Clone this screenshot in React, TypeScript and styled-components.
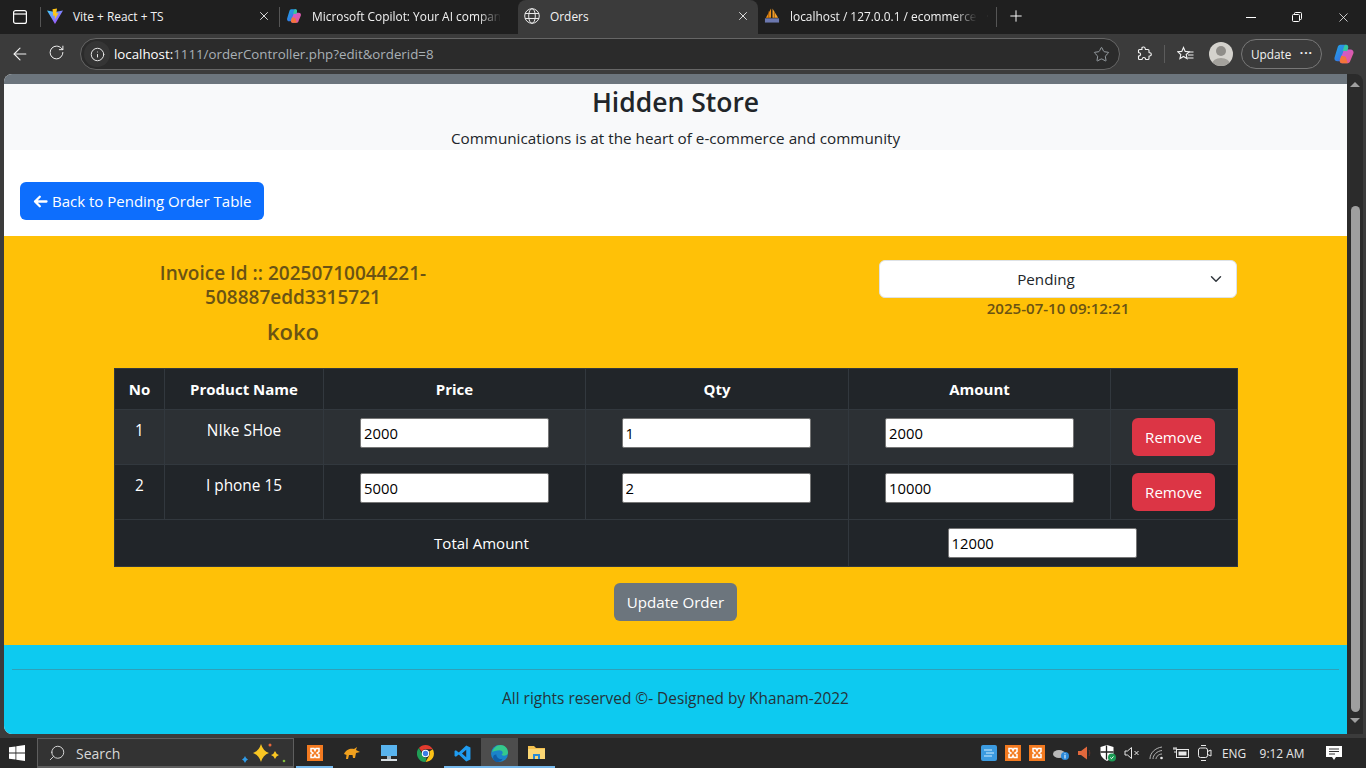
import styled, { createGlobalStyle } from 'styled-components'
import { ArrowLeft, Info, Plus, RotateCw, Search, Star, X } from 'lucide-react'

const GlobalStyle = createGlobalStyle`
  html, body { margin: 0; padding: 0; height: 100%; overflow: hidden; }
  body { font-family: "Open Sans", "Noto Sans", sans-serif; background: #3b3b3b; }
  * { box-sizing: border-box; }
`

const Shell = styled.div`
  width: 1366px;
  height: 768px;
  display: flex;
  flex-direction: column;
  overflow: hidden;
`

/* browser chrome */
const TabStrip = styled.div`
  height: 34px;
  background: #1f1f1f;
  display: flex;
  align-items: center;
  color: #fff;
`
const SideBtn = styled.div`
  width: 40px;
  display: flex;
  justify-content: center;
`
const TabSep = styled.div`
  width: 1px;
  height: 20px;
  background: #555;
`
const Tab = styled.div<{ $active?: boolean; $width?: number }>`
  width: ${p => p.$width ?? 238}px;
  height: 34px;
  display: flex;
  align-items: center;
  gap: 10px;
  padding: 0 8px 3px 6px;
  font-size: 11.9px;
  color: #f2f2f2;
  background: ${p => (p.$active ? '#3b3b3b' : 'transparent')};
  border-radius: ${p => (p.$active ? '8px 8px 0 0' : '0')};
`
const TabIcon = styled.span`
  width: 16px;
  height: 16px;
  display: flex;
  align-items: center;
  justify-content: center;
  flex: none;
`
const TabTitle = styled.span<{ $fade?: boolean }>`
  flex: 1;
  white-space: nowrap;
  ${p => (p.$fade ? 'mask-image: linear-gradient(to right, #000 88%, transparent 100%);' : '')}
`
const NewTab = styled.div`
  width: 38px;
  display: flex;
  justify-content: center;
  padding-bottom: 2px;
`
const WindowControls = styled.div`
  margin-left: auto;
  display: flex;
  width: 138px;
`
const WinBtn = styled.div`
  width: 46px;
  height: 32px;
  display: flex;
  align-items: center;
  justify-content: center;
`

const Toolbar = styled.div`
  height: 40px;
  background: #3b3b3b;
  display: flex;
  align-items: center;
  color: #f2f2f2;
`
const NavBtn = styled.div`
  width: 36px;
  display: flex;
  justify-content: center;
`
const NavGroup = styled.div`
  width: 80px;
  padding-left: 2px;
  display: flex;
`
const AddressBar = styled.div`
  width: 1040px;
  height: 32px;
  background: #2b2b2b;
  border: 1px solid #666;
  border-radius: 16px;
  display: flex;
  align-items: center;
  padding: 0 9px 0 3px;
  font-size: 13.3px;
  color: #a9b0b6;
`
const SiteInfo = styled.div`
  width: 26px;
  height: 26px;
  border-radius: 50%;
  background: #353535;
  display: flex;
  align-items: center;
  justify-content: center;
  color: #e6e6e6;
`
const Url = styled.span`
  flex: 1;
  padding-left: 4px;
`
const UrlHost = styled.span`
  color: #fff;
`
const ToolIcon = styled.div<{ $width: number; $shift?: number }>`
  width: ${p => p.$width}px;
  display: flex;
  justify-content: center;
  align-items: center;
  padding-left: ${p => Math.max(p.$shift ?? 0, 0)}px;
  padding-right: ${p => Math.max(-(p.$shift ?? 0), 0)}px;
`
const ToolSep = styled.div`
  width: 1px;
  height: 18px;
  background: #5c5c5c;
`
const Avatar = styled.div`
  width: 24px;
  height: 24px;
  border-radius: 50%;
  overflow: hidden;
`
const UpdatePill = styled.div`
  width: 81px;
  height: 30px;
  border: 1px solid #777;
  border-radius: 15px;
  display: flex;
  align-items: center;
  justify-content: space-between;
  padding: 0 8px 0 9px;
  font-size: 11.8px;
  color: #f2f2f2;
`
const Dots = styled.span`
  letter-spacing: 1px;
  font-weight: 700;
  font-size: 12px;
  line-height: 1;
  margin-top: -2px;
`

/* viewport */
const Viewport = styled.div`
  flex: 1;
  display: flex;
  padding: 0 3px 4px 4px;
  min-height: 0;
`
const Page = styled.div`
  flex: 1;
  display: flex;
  flex-direction: column;
  color: #212529;
  font-size: 15px;
  line-height: 24px;
  background: #fff;
  overflow: hidden;
  border-radius: 8px 0 0 8px;
`
const Scrollbar = styled.div`
  width: 16px;
  background: #2b2b2b;
  border-radius: 0 8px 0 0;
  display: flex;
  flex-direction: column;
  align-items: center;
  padding-top: 8px;
`
const ScrollArrow = styled.div<{ $down?: boolean }>`
  width: 0;
  height: 0;
  border-left: 5px solid transparent;
  border-right: 5px solid transparent;
  ${p => (p.$down ? 'border-top: 5px solid #9f9f9f;' : 'border-bottom: 5px solid #9f9f9f;')}
`
const ScrollThumb = styled.div`
  width: 9px;
  height: 506px;
  margin-top: 119px;
  margin-bottom: 6px;
  border-radius: 5px;
  background: #9f9f9f;
`
const TopBar = styled.div`
  height: 10px;
  background: #6c757d;
`
const Masthead = styled.header`
  height: 66px;
  background: #f8f9fa;
  text-align: center;
  padding-top: 1px;
`
const StoreTitle = styled.h1`
  margin: 0;
  font-size: 26.5px;
  font-weight: 600;
  line-height: 34px;
`
const Tagline = styled.p`
  margin: 7px 0 0;
  font-size: 15.25px;
  line-height: 24px;
`
const BackRow = styled.div`
  height: 86px;
  padding: 32px 16px 0;
`
const Btn = styled.button<{ $bg: string }>`
  height: 38px;
  border: 0;
  border-radius: 6px;
  background: ${p => p.$bg};
  color: #fff;
  font: inherit;
  font-size: 15.1px;
  padding: 0 13px;
  display: inline-flex;
  align-items: center;
  gap: 4px;
  vertical-align: top;
`
const BackBtn = styled(Btn)`
  font-size: 15px;
  padding-right: 12px;
`
const RemoveBtn = styled(Btn)`
  margin-left: -1px;
`
const OrderSection = styled.section`
  height: 409px;
  background: #ffc107;
  padding: 24px 110px 0 110px;
`
const OrderTop = styled.div`
  height: 108px;
  display: flex;
  justify-content: space-between;
  align-items: flex-start;
`
const InvoiceCol = styled.div`
  width: 358px;
  text-align: center;
  color: #6a5314;
  font-weight: 600;
  padding: 0 30px;
`
const InvoiceId = styled.div`
  font-size: 19px;
  line-height: 24px;
  margin-top: 1px;
`
const Customer = styled.div`
  font-size: 22px;
  line-height: 30px;
  margin-top: 7px;
`
const StatusCol = styled.div`
  width: 358px;
  text-align: center;
  color: #6a5314;
  font-weight: 600;
  font-size: 15.1px;
`
const StatusSelect = styled.select`
  display: block;
  width: 100%;
  height: 38px;
  appearance: none;
  border: 1px solid #dee2e6;
  border-radius: 6px;
  padding: 0 36px 0 12px;
  color: #212529;
  font: 400 15.2px "Open Sans", sans-serif;
  text-align: center;
  background: #fff url("data:image/svg+xml,%3csvg xmlns='http://www.w3.org/2000/svg' viewBox='0 0 16 16'%3e%3cpath fill='none' stroke='%23343a40' stroke-linecap='round' stroke-linejoin='round' stroke-width='2' d='m2 5 6 6 6-6'/%3e%3c/svg%3e") no-repeat right 12px center / 16px 12px;
`
const DateText = styled.div`
  line-height: 20px;
`
const OrderTable = styled.table`
  width: 1123px;
  table-layout: fixed;
  border-collapse: collapse;
  background: #212529;
  color: #fff;
  border: 1px solid #32383e;
  text-align: center;
`
const HeadCell = styled.th`
  height: 41px;
  border: 1px solid #32383e;
  font-weight: 700;
  font-size: 15px;
  padding: 0 8px;
`
const Row = styled.tr<{ $striped?: boolean }>`
  background: ${p => (p.$striped ? '#2c3034' : '#212529')};
`
const Cell = styled.td<{ $nudge?: boolean }>`
  height: 55px;
  border: 1px solid #32383e;
  padding: 8px ${p => (p.$nudge ? '10px' : '8px')} 8px 8px;
  vertical-align: top;
  font-size: 15.4px;
  line-height: 26px;
`
const TotalLabel = styled.td`
  height: 47px;
  border: 1px solid #32383e;
  font-size: 15px;
  padding: 0 8px 1px;
`
const TotalValue = styled.td`
  height: 47px;
  border: 1px solid #32383e;
  padding: 0 10px 1px 8px;
`
const QtyInput = styled.input`
  display: block;
  width: 189px;
  height: 30px;
  margin: 0 auto;
  border: 1px solid #767676;
  border-radius: 2px;
  padding: 0 3px;
  font: 400 14.8px "Open Sans", sans-serif;
  color: #000;
  background: #fff;
`
const UpdateWrap = styled.div`
  padding-top: 16px;
  display: flex;
  justify-content: center;
`
const Footer = styled.footer`
  height: 89px;
  background: #0dcaf0;
  padding: 24px 8px 0;
  text-align: center;
`
const FooterRule = styled.hr`
  margin: 0;
  border: 0;
  border-top: 1px solid #2fa0b8;
`
const FooterText = styled.p`
  margin: 17px 0 0;
  font-size: 15.4px;
  line-height: 24px;
  color: #24343a;
`

/* taskbar */
const Taskbar = styled.div`
  height: 30px;
  background: #272727;
  display: flex;
  align-items: center;
  color: #e8e8e8;
`
const StartBtn = styled.div`
  width: 37px;
  display: flex;
  justify-content: center;
  padding-right: 3px;
`
const SearchBox = styled.div`
  width: 257px;
  height: 30px;
  background: #333;
  border: 1px solid #5e5e5e;
  border-bottom-width: 2px;
  display: flex;
  align-items: center;
  padding: 0 6px 0 10px;
  gap: 10px;
  font-size: 14px;
  color: #d8d8d8;
`
const SearchGlyph = styled.span`
  display: flex;
  transform: scaleX(-1);
`
const SearchLabel = styled.span`
  flex: 1;
  padding-top: 1px;
`
const TaskIcons = styled.div`
  display: flex;
  padding-left: 2px;
`
const TaskItem = styled.div<{ $active?: boolean; $running?: boolean }>`
  width: 37px;
  height: 30px;
  display: flex;
  align-items: center;
  justify-content: center;
  background: ${p => (p.$active ? '#4d4d4d' : 'transparent')};
  border-bottom: 2px solid ${p => (p.$running || p.$active ? '#76b9ed' : 'transparent')};
  padding-top: 2px;
`
const Tray = styled.div`
  margin-left: auto;
  display: flex;
  align-items: center;
  height: 30px;
  font-size: 11.9px;
`
const TrayItem = styled.div<{ $width: number }>`
  width: ${p => p.$width}px;
  display: flex;
  justify-content: center;
  align-items: center;
`

const ViteLogo = () => (
  <svg width="16" height="16" viewBox="0 0 16 16">
    <defs>
      <linearGradient id="vt" x1="0" y1="0" x2="1" y2="1">
        <stop offset="0" stopColor="#41d1ff" />
        <stop offset="1" stopColor="#bd34fe" />
      </linearGradient>
    </defs>
    <path d="M0 2.500 L8 4 L16 2.500 L8 16 Z" fill="url(#vt)" />
    <path d="M10 0.500 L5.500 1.300 L6.300 8 L8 7.500 L7.700 11.500 L11.500 5 L9.300 5.500 Z" fill="#ffc517" />
  </svg>
)

const CopilotLogo = ({ size = 16, id }: { size?: number; id: string }) => (
  <svg width={size} height={size} viewBox="0 0 24 24">
    <defs>
      <linearGradient id={`${id}a`} x1="0" y1="0" x2="1" y2="1">
        <stop offset="0" stopColor="#1fa8e8" />
        <stop offset="1" stopColor="#3f5fe0" />
      </linearGradient>
      <linearGradient id={`${id}b`} x1="0" y1="0" x2="1" y2="1">
        <stop offset="0" stopColor="#c65be0" />
        <stop offset="1" stopColor="#e85a8a" />
      </linearGradient>
    </defs>
    <path d="M8 2h6c2 0 3 1.500 2.500 3.500L13 17c-.6 2-2 3-4 3H5c-2.500 0-4-2-3.300-4.300L5 5c.5-2 1.500-3 3-3z" fill={`url(#${id}a)`} />
    <path d="M13 7h6c2.500 0 4 2 3.300 4.300L19 19c-.5 2-1.500 3-3 3h-6c-2 0-3-1.500-2.500-3.500L11 10c.4-2 1-3 2-3z" fill={`url(#${id}b)`} />
    <path d="M10 22c-2 0-3-1.500-2.500-3.500L9 14l5 1 2 7z" fill="#f4743b" />
    <path d="M14 2c2 0 3 1.500 2.500 3.500L15.500 9l-5-.5L12 4c.3-1 1-2 2-2z" fill="#35c7a0" />
  </svg>
)

const GlobeIcon = () => (
  <svg width="16" height="16" viewBox="0 0 16 16" fill="none" stroke="#e8e8e8" strokeWidth="1">
    <circle cx="8" cy="8" r="7.300" />
    <ellipse cx="8" cy="8" rx="3.300" ry="7.300" />
    <path d="M1 5.500h14M1 10.500h14" />
  </svg>
)

const PmaLogo = () => (
  <svg width="17" height="17" viewBox="0 0 17 17">
    <path d="M7.500 1 L2 11 L7.500 11 Z" fill="#f29111" />
    <path d="M9 1 L15 11 L9 11 Z" fill="#f6a32c" />
    <path d="M5 4v7M11 5v6" stroke="#8a4d10" strokeWidth="0.800" />
    <rect x="1" y="11.500" width="15" height="4.500" fill="#6c78af" />
  </svg>
)

const XamppLogo = ({ size = 16 }: { size?: number }) => (
  <svg width={size} height={size} viewBox="0 0 16 16">
    <rect width="16" height="16" fill="#f37a20" />
    <path d="M4 3.500h3l1 2 1-2h3v3l-2 1.500 2 1.500v3H9l-1-2-1 2H4v-3l2-1.500-2-1.500z" fill="none" stroke="#fff" strokeWidth="1.500" />
  </svg>
)

const SidebarIcon = () => (
  <svg width="14" height="14" viewBox="0 0 14 14" fill="none" stroke="#fff" strokeWidth="1.200">
    <rect x="0.600" y="0.600" width="12.800" height="12.800" rx="2" />
    <path d="M0.600 4h12.800" />
  </svg>
)

const RestoreIcon = () => (
  <svg width="10" height="10" viewBox="0 0 10 10" fill="none" stroke="#fff" strokeWidth="1">
    <rect x="0.500" y="2.500" width="7" height="7" rx="1" />
    <path d="M2.500 2.500V1.500a1 1 0 0 1 1-1h5a1 1 0 0 1 1 1v5a1 1 0 0 1-1 1h-1" />
  </svg>
)

const MinIcon = () => (
  <svg width="10" height="10" viewBox="0 0 10 10" stroke="#fff" strokeWidth="1">
    <path d="M0 5.500h10" />
  </svg>
)

const PuzzleIcon = () => (
  <svg width="16" height="16" viewBox="0 0 16 16" fill="none" stroke="#f2f2f2" strokeWidth="1.100">
    <path d="M6 1.500c1-1 3-.6 3.200 1 .1.500 0 .8.300 1h2.500c.5 0 1 .5 1 1v2c.3.400.6.300 1 .3 1.500.2 1.800 2.300.3 3-.5.200-1 .1-1.300.3v2.400c0 .5-.5 1-1 1h-2.300c-.3-.4-.1-.9-.4-1.300-.8-1.200-2.700-.9-3 .4-.1.400 0 .7-.3.900H3.500c-.5 0-1-.5-1-1v-2.400c.3-.3.800-.2 1.200-.4 1.300-.6 1.100-2.600-.4-2.900-.3 0-.6 0-.8-.3V4.500c0-.5.5-1 1-1H6c.3-.5-.5-1.200 0-2z" />
  </svg>
)

const FavIcon = () => (
  <svg width="18" height="16" viewBox="0 0 18 16" fill="none" stroke="#f2f2f2" strokeWidth="1.100">
    <path d="M6.500 1.500l1.700 3.900 4 .4-3 2.700.9 4.100-3.600-2.100-3.600 2.100.9-4.100-3-2.700 4-.4z" />
    <path d="M11.500 6h5M11 9h5.500M10.500 12h6" />
  </svg>
)

const AvatarImg = () => (
  <svg width="24" height="24" viewBox="0 0 24 24">
    <rect width="24" height="24" fill="#d4d2cd" />
    <circle cx="12" cy="9" r="5" fill="#8f8d89" />
    <ellipse cx="12" cy="22" rx="9" ry="6" fill="#a3a19c" />
  </svg>
)

const BackArrow = () => (
  <svg width="15" height="13" viewBox="0 0 15 13" fill="none" stroke="#fff" strokeWidth="2.300" strokeLinecap="round" strokeLinejoin="round">
    <path d="M13.500 6.500H2M6.800 1.700 2 6.500l4.800 4.800" />
  </svg>
)

const WindowsLogo = () => (
  <svg width="16" height="16" viewBox="0 0 16 16" fill="#fff">
    <path d="M0 2.300 6.500 1.400v6.200H0zM7.300 1.300 16 0v7.600H7.300zM0 8.400h6.500v6.200L0 13.700zM7.300 8.400H16V16l-8.700-1.300z" />
  </svg>
)

const Sparkles = () => (
  <svg width="46" height="24" viewBox="0 0 46 24">
    <path d="M20 3 Q22 10 28 12 Q22 14 20 21 Q18 14 12 12 Q18 10 20 3Z" fill="#f9c623" />
    <path d="M34 10 Q35 13 38 14 Q35 15 34 18 Q33 15 30 14 Q33 13 34 10Z" fill="#f9c623" />
    <path d="M4 15 Q5 18 7 18.500 Q5 19 4 22 Q3 19 1 18.500 Q3 18 4 15Z" fill="#2f9be8" />
    <circle cx="29" cy="4" r="1.500" fill="#e8663a" />
    <circle cx="43" cy="20" r="1.300" fill="#7fba3c" />
  </svg>
)

const PgIcon = () => (
  <svg width="18" height="16" viewBox="0 0 18 16">
    <path d="M1 9 C3 4 8 3 11 4 L14 2 L13 5 L17 7 L13 8 L12 13 L10 13 L9.500 10 L6 10 L5 14 L3 14 L3.500 10 Z" fill="#f0a01e" />
  </svg>
)

const MonitorIcon = () => (
  <svg width="18" height="18" viewBox="0 0 18 18">
    <rect x="1" y="1" width="16" height="11" fill="#59b4ee" />
    <rect x="7" y="12" width="4" height="3" fill="#9fb8c8" />
    <rect x="1" y="15" width="16" height="2" fill="#d6dde2" />
  </svg>
)

const ChromeIcon = () => (
  <svg width="17" height="17" viewBox="0 0 16 16">
    <path d="M8 0a8 8 0 0 1 6.900 4H8a4 4 0 0 0-3.500 2L1.800 2.900A8 8 0 0 1 8 0z" fill="#e33b2e" />
    <path d="M14.900 4A8 8 0 0 1 8 16l3.400-6A4 4 0 0 0 11.500 6z" fill="#fbc116" />
    <path d="M8 16A8 8 0 0 1 1.800 2.900L4.500 8A4 4 0 0 0 9 12z" fill="#1f9d55" />
    <circle cx="8" cy="8" r="3" fill="#3b7de8" stroke="#fff" strokeWidth="1" />
  </svg>
)

const VsCodeIcon = () => (
  <svg width="17" height="17" viewBox="0 0 16 16">
    <path d="M11.500 0.500 15.500 2.300V13.700L11.500 15.500 4.500 9 1.800 11 .5 10.300V5.700L1.800 5 4.500 7zM11.500 4.500 7.500 8l4 3.500z" fill="#1f9cf0" />
  </svg>
)

const EdgeIcon = () => (
  <svg width="17" height="17" viewBox="0 0 16 16">
    <circle cx="8" cy="8" r="8" fill="#1b84c9" />
    <path d="M1 7c1-4 4-7 8-7 4 0 7 3 7 7 0 2-2 3-4 3-1 0-2-.5-2-1 2-1 1-4-2-4-3 0-6 1-7 2z" fill="#35c98c" />
    <path d="M5 9c0 3 3 5 6 4-1 2-3 3-5 3-2 0-4-2-4-4 0-2 1-3 3-3z" fill="#0f5ea8" />
  </svg>
)

const FolderIcon = () => (
  <svg width="17" height="16" viewBox="0 0 17 16">
    <path d="M0 1h6l2 2h9v11H0z" fill="#f4c04e" />
    <rect x="0" y="4" width="17" height="10" fill="#fbd774" />
    <path d="M5 9h7v5h-2v-3H7v3H5z" fill="#2a8ad4" />
  </svg>
)

const CloudIcon = () => (
  <svg width="18" height="16" viewBox="0 0 18 16">
    <ellipse cx="7" cy="9" rx="6" ry="4" fill="#b8b8b8" />
    <circle cx="13" cy="11" r="4" fill="#2b88d8" />
    <rect x="12.500" y="10" width="1" height="3.500" fill="#fff" />
    <rect x="12.500" y="8.300" width="1" height="1" fill="#fff" />
  </svg>
)

const RedSpeaker = () => (
  <svg width="16" height="16" viewBox="0 0 16 16">
    <path d="M1 6h3l6-4.500v13L4 10H1z" fill="#e2683c" />
    <path d="M12 5c1 2 1 4 0 6" stroke="#6e3326" fill="none" />
  </svg>
)

const ShieldIcon = () => (
  <svg width="18" height="18" viewBox="0 0 18 18">
    <path d="M8 1 14.500 3v6c0 3.500-3 6-6.500 8-3.500-2-6.500-4.500-6.500-8V3z" fill="#fff" />
    <path d="M7.500 1.500v14M1.500 8h13" stroke="#222" strokeWidth="1.300" />
    <circle cx="13" cy="13.500" r="4" fill="#1a9a54" />
    <path d="M11.300 13.500l1.200 1.200 2-2.200" stroke="#fff" fill="none" />
  </svg>
)

const MuteIcon = () => (
  <svg width="16" height="14" viewBox="0 0 16 14" fill="none" stroke="#e8e8e8">
    <path d="M1 5h2.500L7.500 1.500v11L3.500 9H1z" />
    <path d="M10.500 5l4 4M14.500 5l-4 4" />
  </svg>
)

const WifiIcon = () => (
  <svg width="16" height="14" viewBox="0 0 16 14" fill="none" stroke="#b5b5b5">
    <path d="M1 13C1 7 6 2 13 1M4 13c0-4 4-8 9-8.500M7 13c0-2.500 3-5 6-5" />
    <circle cx="12.500" cy="12" r="1.300" fill="#e8e8e8" stroke="none" />
  </svg>
)

const BatteryIcon = () => (
  <svg width="18" height="14" viewBox="0 0 18 14" fill="none" stroke="#e8e8e8">
    <rect x="4.500" y="3.500" width="12" height="8" />
    <rect x="6.500" y="5.500" width="8" height="4" fill="#e8e8e8" stroke="none" />
    <path d="M1 3h4M2 1v2M4 1v2M3 5v2" />
  </svg>
)

const CameraIcon = () => (
  <svg width="14" height="18" viewBox="0 0 14 18" fill="none" stroke="#e8e8e8">
    <rect x="0.500" y="4" width="9" height="9.500" rx="2" />
    <path d="M9.500 7.500 13 6v6l-3.500-1.500M3 1.500h5M3 16.500h5" />
  </svg>
)

const ChatIcon = () => (
  <svg width="16" height="16" viewBox="0 0 16 16">
    <path d="M0 1h16v11h-6l-2 3-2-3H0z" fill="#fff" />
    <path d="M3 4h10M3 6.500h10M3 9h6" stroke="#333" />
  </svg>
)

const TrayAppIcon = () => (
  <svg width="16" height="16" viewBox="0 0 16 16">
    <rect width="16" height="16" rx="2" fill="#3c9be0" />
    <path d="M3 5h8M5 8h8M3 11h8" stroke="#cfeeff" />
  </svg>
)

const items = [
  { no: 1, name: 'NIke SHoe', price: 2000, qty: 1, amount: 2000 },
  { no: 2, name: 'I phone 15', price: 5000, qty: 2, amount: 10000 },
]

const App = () => {
  return (
    <Shell>
      <GlobalStyle />
      <TabStrip>
        <SideBtn><SidebarIcon /></SideBtn>
        <TabSep />
        <Tab>
          <TabIcon><ViteLogo /></TabIcon>
          <TabTitle>Vite + React + TS</TabTitle>
          <X size={14} strokeWidth={1.5} />
        </Tab>
        <TabSep />
        <Tab>
          <TabIcon><CopilotLogo id="tabc" /></TabIcon>
          <TabTitle $fade>Microsoft Copilot: Your AI compan</TabTitle>
          <X size={14} strokeWidth={1.5} />
        </Tab>
        <Tab $active $width={240}>
          <TabIcon><GlobeIcon /></TabIcon>
          <TabTitle>Orders</TabTitle>
          <X size={14} strokeWidth={1.5} />
        </Tab>
        <Tab>
          <TabIcon><PmaLogo /></TabIcon>
          <TabTitle $fade>localhost / 127.0.0.1 / ecommerce</TabTitle>
          <X size={14} strokeWidth={1.5} />
        </Tab>
        <TabSep />
        <NewTab><Plus size={18} strokeWidth={1.3} /></NewTab>
        <WindowControls>
          <WinBtn><MinIcon /></WinBtn>
          <WinBtn><RestoreIcon /></WinBtn>
          <WinBtn><X size={15} strokeWidth={1.2} /></WinBtn>
        </WindowControls>
      </TabStrip>

      <Toolbar>
        <NavGroup>
          <NavBtn><ArrowLeft size={20} strokeWidth={1.3} /></NavBtn>
          <NavBtn><RotateCw size={17} strokeWidth={1.4} /></NavBtn>
        </NavGroup>
        <AddressBar>
          <SiteInfo><Info size={15} strokeWidth={1.6} /></SiteInfo>
          <Url><UrlHost>localhost:</UrlHost>1111/orderController.php?edit&amp;orderid=8</Url>
          <Star size={17} strokeWidth={1.2} />
        </AddressBar>
        <ToolIcon $width={44} $shift={4}><PuzzleIcon /></ToolIcon>
        <ToolSep />
        <ToolIcon $width={44} $shift={-2}><FavIcon /></ToolIcon>
        <Avatar><AvatarImg /></Avatar>
        <ToolIcon $width={8} />
        <UpdatePill>Update <Dots>···</Dots></UpdatePill>
        <ToolIcon $width={44}><CopilotLogo size={22} id="barc" /></ToolIcon>
      </Toolbar>

      <Viewport>
        <Page>
          <TopBar />
          <Masthead>
            <StoreTitle>Hidden Store</StoreTitle>
            <Tagline>Communications is at the heart of e-commerce and community</Tagline>
          </Masthead>
          <BackRow>
            <BackBtn $bg="#0d6efd"><BackArrow />Back to Pending Order Table</BackBtn>
          </BackRow>
          <OrderSection>
            <OrderTop>
              <InvoiceCol>
                <InvoiceId>Invoice Id :: 20250710044221-508887edd3315721</InvoiceId>
                <Customer>koko</Customer>
              </InvoiceCol>
              <StatusCol>
                <StatusSelect defaultValue="Pending">
                  <option>Pending</option>
                </StatusSelect>
                <DateText>2025-07-10 09:12:21</DateText>
              </StatusCol>
            </OrderTop>
            <OrderTable>
              <colgroup>
                <col width="50" />
                <col width="159" />
                <col width="262" />
                <col width="263" />
                <col width="262" />
                <col width="127" />
              </colgroup>
              <thead>
                <tr>
                  <HeadCell>No</HeadCell>
                  <HeadCell>Product Name</HeadCell>
                  <HeadCell>Price</HeadCell>
                  <HeadCell>Qty</HeadCell>
                  <HeadCell>Amount</HeadCell>
                  <HeadCell />
                </tr>
              </thead>
              <tbody>
                {items.map(item => (
                  <Row key={item.no} $striped={item.no === 1}>
                    <Cell>{item.no}</Cell>
                    <Cell>{item.name}</Cell>
                    <Cell><QtyInput defaultValue={item.price} /></Cell>
                    <Cell $nudge><QtyInput defaultValue={item.qty} /></Cell>
                    <Cell><QtyInput defaultValue={item.amount} /></Cell>
                    <Cell><RemoveBtn $bg="#dc3545">Remove</RemoveBtn></Cell>
                  </Row>
                ))}
                <tr>
                  <TotalLabel colSpan={4}>Total Amount</TotalLabel>
                  <TotalValue colSpan={2}><QtyInput defaultValue={12000} /></TotalValue>
                </tr>
              </tbody>
            </OrderTable>
            <UpdateWrap>
              <Btn $bg="#6c757d">Update Order</Btn>
            </UpdateWrap>
          </OrderSection>
          <Footer>
            <FooterRule />
            <FooterText>All rights reserved ©- Designed by Khanam-2022</FooterText>
          </Footer>
        </Page>
        <Scrollbar>
          <ScrollArrow />
          <ScrollThumb />
          <ScrollArrow $down />
        </Scrollbar>
      </Viewport>

      <Taskbar>
        <StartBtn><WindowsLogo /></StartBtn>
        <SearchBox>
          <SearchGlyph><Search size={18} strokeWidth={1.3} /></SearchGlyph>
          <SearchLabel>Search</SearchLabel>
          <Sparkles />
        </SearchBox>
        <TaskIcons>
          <TaskItem $running><XamppLogo /></TaskItem>
          <TaskItem><PgIcon /></TaskItem>
          <TaskItem><MonitorIcon /></TaskItem>
          <TaskItem><ChromeIcon /></TaskItem>
          <TaskItem $running><VsCodeIcon /></TaskItem>
          <TaskItem $active><EdgeIcon /></TaskItem>
          <TaskItem $running><FolderIcon /></TaskItem>
        </TaskIcons>
        <Tray>
          <TrayItem $width={24}><TrayAppIcon /></TrayItem>
          <TrayItem $width={24}><XamppLogo /></TrayItem>
          <TrayItem $width={24}><XamppLogo /></TrayItem>
          <TrayItem $width={24}><CloudIcon /></TrayItem>
          <TrayItem $width={23}><RedSpeaker /></TrayItem>
          <TrayItem $width={24}><ShieldIcon /></TrayItem>
          <TrayItem $width={24}><MuteIcon /></TrayItem>
          <TrayItem $width={25}><WifiIcon /></TrayItem>
          <TrayItem $width={24}><BatteryIcon /></TrayItem>
          <TrayItem $width={24}><CameraIcon /></TrayItem>
          <TrayItem $width={34}>ENG</TrayItem>
          <TrayItem $width={62}>9:12 AM</TrayItem>
          <TrayItem $width={41}><ChatIcon /></TrayItem>
          <TrayItem $width={12} />
        </Tray>
      </Taskbar>
    </Shell>
  )
}

export default App
